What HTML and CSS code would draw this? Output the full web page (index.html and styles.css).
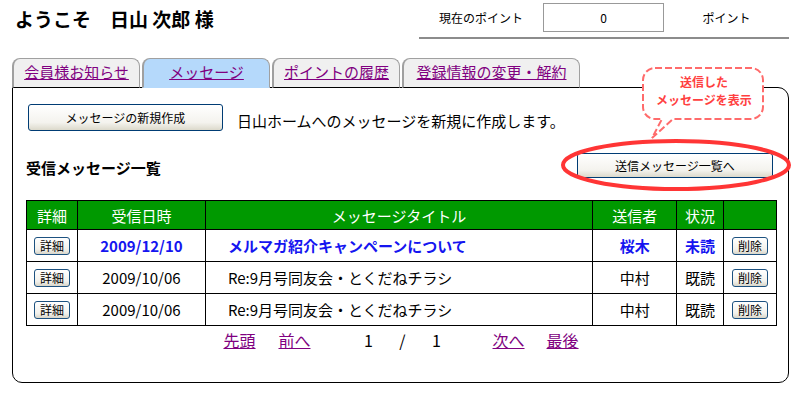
FILE: index.html
```html
<!DOCTYPE html>
<html lang="ja">

<head>
    <meta charset="UTF-8">
    <meta name="viewport" content="width=device-width, initial-scale=1.0">
    <title>メッセージ</title>
    <link rel="stylesheet" href="styles.css">
</head>

<body>
    <div class="header">
        <h1>ようこそ　日山 次郎 様</h1>
        <div class="points">
            <span class="points-label">現在のポイント</span>
            <span class="points-box">0</span>
            <span class="points-unit">ポイント</span>
        </div>
    </div>

    <div class="tabs">
        <a href="#" class="tab">会員様お知らせ</a>
        <a href="#" class="tab active">メッセージ</a>
        <a href="#" class="tab">ポイントの履歴</a>
        <a href="#" class="tab wide">登録情報の変更・解約</a>
    </div>

    <div class="panel">
        <div class="new-row">
            <button class="xp-btn new-btn">メッセージの新規作成</button>
            <span class="new-text">日山ホームへのメッセージを新規に作成します。</span>
        </div>

        <div class="list-row">
            <h2>受信メッセージ一覧</h2>
            <button class="xp-btn sent-btn">送信メッセージ一覧へ</button>
        </div>

        <table class="messages">
            <tr>
                <th class="c-detail">詳細</th>
                <th class="c-date">受信日時</th>
                <th class="c-title">メッセージタイトル</th>
                <th class="c-from">送信者</th>
                <th class="c-state">状況</th>
                <th class="c-del"></th>
            </tr>
            <tr class="unread">
                <td><button class="mini-btn">詳細</button></td>
                <td>2009/12/10</td>
                <td class="title">メルマガ紹介キャンペーンについて</td>
                <td>桜木</td>
                <td>未読</td>
                <td><button class="mini-btn">削除</button></td>
            </tr>
            <tr>
                <td><button class="mini-btn">詳細</button></td>
                <td>2009/10/06</td>
                <td class="title">Re:9月号同友会・とくだねチラシ</td>
                <td>中村</td>
                <td>既読</td>
                <td><button class="mini-btn">削除</button></td>
            </tr>
            <tr>
                <td><button class="mini-btn">詳細</button></td>
                <td>2009/10/06</td>
                <td class="title">Re:9月号同友会・とくだねチラシ</td>
                <td>中村</td>
                <td>既読</td>
                <td><button class="mini-btn">削除</button></td>
            </tr>
        </table>

        <div class="pager">
            <a href="#">先頭</a>
            <a href="#" class="prev">前へ</a>
            <span class="num">1</span>
            <span class="num">/</span>
            <span class="num">1</span>
            <a href="#" class="next">次へ</a>
            <a href="#">最後</a>
        </div>
    </div>

    <!-- annotation drawn over the screen -->
    <svg class="ring" width="236" height="58" viewBox="0 0 236 58">
        <defs>
            <filter id="soft"><feGaussianBlur stdDeviation="0.7" /></filter>
        </defs>
        <ellipse cx="118" cy="28" rx="113" ry="24" fill="none" stroke="#ff3535" stroke-width="4" filter="url(#soft)" />
    </svg>

    <div class="callout">
        <svg class="callout-shape" width="126" height="78" viewBox="0 0 126 78">
            <path d="M14,2 H110 A12,12 0 0 1 122,14 V41 A12,12 0 0 1 110,53 H32 L11,72 L21,53 H14 A12,12 0 0 1 2,41 V14 A12,12 0 0 1 14,2 Z"
                fill="#fff" stroke="#ff6b6b" stroke-width="2" stroke-dasharray="7 3" />
        </svg>
        <p>送信した<br>メッセージを表示</p>
    </div>
</body>

</html>
```

FILE: styles.css
```css
* {
    margin: 0;
    padding: 0;
    box-sizing: border-box;
}

body {
    position: relative;
    width: 801px;
    background-color: #FFF;
    color: #000;
    font-family: "Noto Sans CJK JP", "Liberation Sans", sans-serif;
}

.header {
    display: flex;
    justify-content: space-between;
    padding-right: 12px;
    height: 39px;
}

h1 {
    font-size: 19px;
    font-weight: bold;
    line-height: 24px;
    padding: 7px 0 0 15px;
}

.points {
    display: flex;
    align-items: center;
    width: 370px;
    height: 39px;
    padding-bottom: 2px;
    border-bottom: 2px solid #8c8c8c;
    font-size: 12px;
}

.points-label {
    width: 124px;
    text-align: center;
}

.points-box {
    width: 121px;
    height: 29px;
    line-height: 27px;
    border: 1px solid #999;
    text-align: center;
}

.points-unit {
    flex: 1;
    text-align: center;
}

.tabs {
    display: flex;
    gap: 2px;
    padding-left: 12px;
    margin-top: 19px;
    position: relative;
    z-index: 1;
}

.tab {
    width: 128px;
    height: 30px;
    margin-bottom: -1px;
    border: 1px solid #a0a0a0;
    border-left: 2px solid #a0a0a0;
    border-bottom: 1px solid #000;
    border-radius: 8px 8px 0 0;
    background-color: #f0f0f0;
    color: #800080;
    font-size: 15px;
    line-height: 26px;
    text-align: center;
}

.tab.active {
    background-color: #b5d9fb;
    border-bottom-color: #b5d9fb;
}

.tab.wide {
    width: 178px;
}

.panel {
    margin: 0 12px;
    height: 296px;
    border: 1px solid #000;
    border-radius: 0 11px 10px 10px;
    padding: 16px 12px 0 13px;
}

.new-row {
    display: flex;
    align-items: center;
    gap: 14px;
    padding-left: 2px;
}

.xp-btn {
    border: 1px solid #003c74;
    border-radius: 3px;
    background: linear-gradient(#fff, #f4f3ee 70%, #dcd9cb);
    font-family: "Noto Sans CJK JP", sans-serif;
    font-size: 12px;
    color: #000;
}

.new-btn {
    width: 195px;
    height: 27px;
}

.new-text {
    font-size: 15px;
    padding-top: 5px;
}

.list-row {
    display: flex;
    justify-content: space-between;
    align-items: flex-end;
    margin-top: 22px;
    padding-right: 3px;
}

h2 {
    font-size: 15px;
    font-weight: bold;
    line-height: 18px;
    margin-bottom: 1px;
}

.sent-btn {
    width: 196px;
    height: 25px;
}

.messages {
    margin-top: 22px;
    width: 751px;
    border-collapse: collapse;
    font-size: 15px;
}

.messages th,
.messages td {
    border: 1px solid #000;
    text-align: center;
    height: 32px;
    padding: 0;
}

.messages th {
    height: 29px;
    background-color: #009900;
    color: #FFF;
    font-weight: normal;
}

.c-detail { width: 51px; }
.c-date { width: 128px; }
.c-title { width: 388px; }
.c-from { width: 84px; }
.c-state { width: 47px; }
.c-del { width: 53px; }

.messages td.title {
    text-align: left;
    padding-left: 22px;
}

.messages .unread td {
    color: #1515f0;
    font-weight: bold;
}

.mini-btn {
    display: block;
    margin: 0 auto;
    width: 36px;
    height: 18px;
    border: 1px solid #1c5180;
    border-radius: 3px;
    background: linear-gradient(#fff, #f2f1ec 70%, #d8d5c8);
    font-family: "Noto Sans CJK JP", sans-serif;
    font-size: 12px;
    line-height: 15px;
    color: #000;
}

.pager {
    display: flex;
    justify-content: center;
    margin-top: 3px;
    font-size: 16px;
    line-height: 22px;
}

.pager a {
    color: #800080;
}

.pager .prev {
    margin: 0 41px 0 23px;
}

.pager .next {
    margin: 0 22px 0 39px;
}

.pager .num {
    width: 34px;
    text-align: center;
}

.ring {
    position: absolute;
    left: 558px;
    top: 137px;
}

.callout {
    position: absolute;
    left: 641px;
    top: 66px;
    width: 126px;
    height: 78px;
}

.callout-shape {
    position: absolute;
    left: 0;
    top: 0;
}

.callout p {
    position: relative;
    padding-top: 7px;
    text-align: center;
    color: #ff4040;
    font-size: 12px;
    font-weight: bold;
    line-height: 18px;
}
```
